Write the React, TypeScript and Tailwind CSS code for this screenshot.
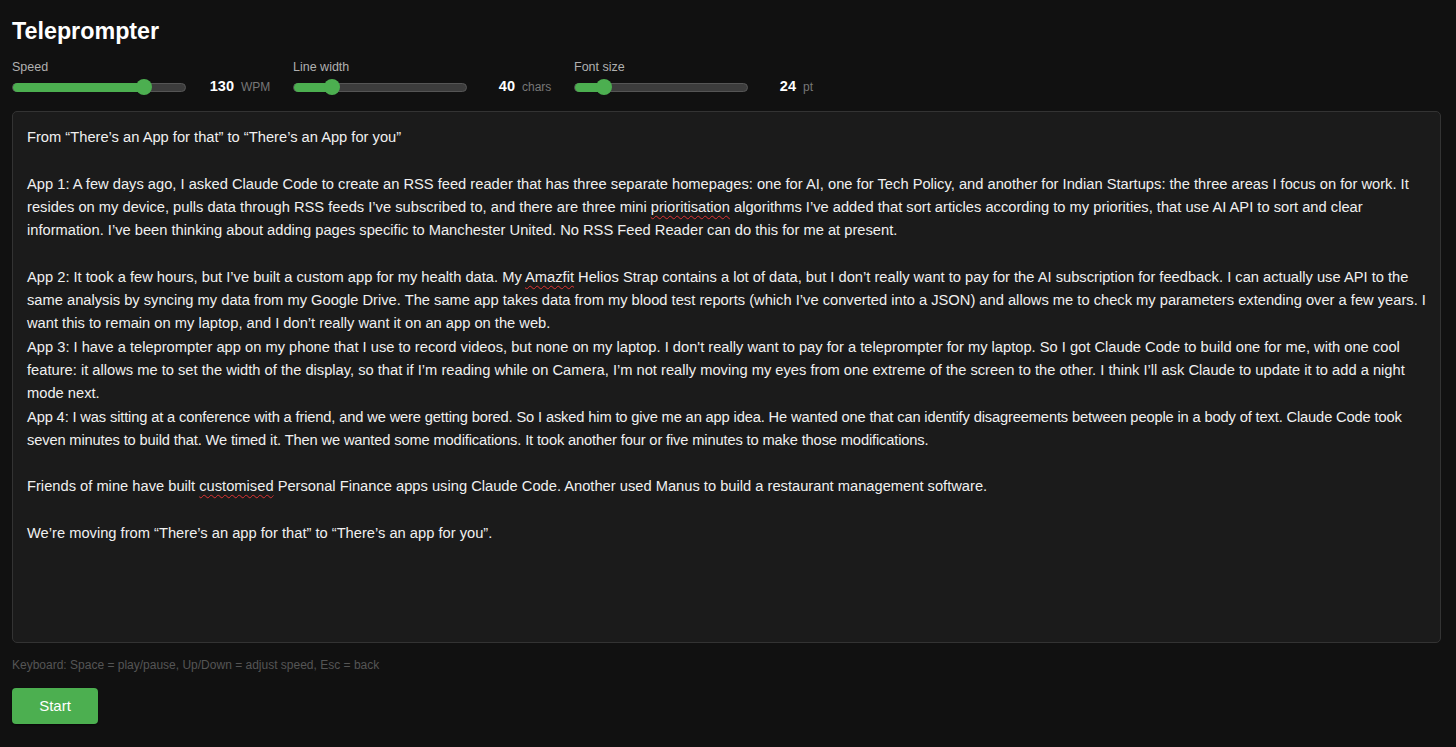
import React, { useState } from 'react';

interface SliderProps {
  label: string;
  value: number;
  min: number;
  max: number;
  unit: string;
  onChange: (v: number) => void;
}

const Slider: React.FC<SliderProps> = ({ label, value, min, max, unit, onChange }) => {
  const pct = ((value - min) / (max - min)) * 100;
  return (
    <div className="flex flex-col w-[281px]">
      <span className="text-[12.5px] leading-[16px] text-[#b0b0b0]">{label}</span>
      <div className="flex items-center h-[24px]">
        <div className="relative w-[174px] h-[9px] rounded-full bg-[#3c3c3c] border border-[#555]">
          <div className="absolute left-0 top-[-1px] h-[9px] rounded-full bg-[#4caf50]" style={{ width: `${pct}%` }} />
          <div
            className="absolute top-1/2 w-[16px] h-[16px] -translate-x-1/2 -translate-y-1/2 rounded-full bg-[#4caf50]"
            style={{ left: `${pct}%` }}
          />
          <input
            type="range"
            min={min}
            max={max}
            value={value}
            onChange={e => onChange(Number(e.target.value))}
            className="absolute inset-0 w-full opacity-0 cursor-pointer"
          />
        </div>
        <span className="w-[48px] text-right text-[14.5px] font-bold text-white">{value}</span>
        <span className="ml-[7px] text-[12px] text-[#777]">{unit}</span>
      </div>
    </div>
  );
};

const Misspelt: React.FC<{ children: React.ReactNode }> = ({ children }) => (
  <span className="underline decoration-wavy decoration-[#d33] decoration-1 underline-offset-[3px]">{children}</span>
);

export default function App() {
  const [speed, setSpeed] = useState(130);
  const [lineWidth, setLineWidth] = useState(40);
  const [fontSize, setFontSize] = useState(24);

  return (
    <div className="min-h-screen bg-[#111111] pl-[12px] pr-[15px] pt-[17px] text-white font-['Liberation_Sans',Arial,sans-serif]">
      <h1 className="text-[23.3px] leading-[28px] font-bold">Teleprompter</h1>

      <div className="flex mt-[14px]">
        <Slider label="Speed" value={speed} min={50} max={155} unit="WPM" onChange={setSpeed} />
        <Slider label="Line width" value={lineWidth} min={20} max={110} unit="chars" onChange={setLineWidth} />
        <Slider label="Font size" value={fontSize} min={16} max={63} unit="pt" onChange={setFontSize} />
      </div>

      <div className="mt-[12px] h-[532px] rounded-[5px] border border-[#333] bg-[#1b1b1b] pl-[14px] pr-[9px] pt-[14px] text-[14.7px] leading-[23.3px] text-[#f0f0f0] whitespace-pre-wrap overflow-hidden">
        {'From “There’s an App for that” to “There’s an App for you”\n\n'}
        {'App 1: A few days ago, I asked Claude Code to create an RSS feed reader that has three separate homepages: one for AI, one for Tech Policy, and another for Indian Startups: the three areas I focus on for work. It resides on my device, pulls data through RSS feeds I’ve subscribed to, and there are three mini '}
        <Misspelt>prioritisation</Misspelt>
        {' algorithms I’ve added that sort articles according to my priorities, that use AI API to sort and clear information. I’ve been thinking about adding pages specific to Manchester United. No RSS Feed Reader can do this for me at present.\n\n'}
        {'App 2: It took a few hours, but I’ve built a custom app for my health data. My '}
        <Misspelt>Amazfit</Misspelt>
        {' Helios Strap contains a lot of data, but I don’t really want to pay for the AI subscription for feedback. I can actually use API to the same analysis by syncing my data from my Google Drive. The same app takes data from my blood test reports (which I’ve converted into a JSON) and allows me to check my parameters extending over a few years. I want this to remain on my laptop, and I don’t really want it on an app on the web.\n'}
        {'App 3: I have a teleprompter app on my phone that I use to record videos, but none on my laptop. I don\'t really want to pay for a teleprompter for my laptop. So I got Claude Code to build one for me, with one cool feature: it allows me to set the width of the display, so that if I’m reading while on Camera, I’m not really moving my eyes from one extreme of the screen to the other. I think I’ll ask Claude to update it to add a night mode next.\n'}
        <span className="tracking-[-0.15px]">
          {'App 4: I was sitting at a conference with a friend, and we were getting bored. So I asked him to give me an app idea. He wanted one that can identify disagreements between people in a body of text. Claude Code took seven minutes to build that. We timed it. Then we wanted some modifications. It took another four or five minutes to make those modifications.'}
        </span>
        {'\n\n'}
        {'Friends of mine have built '}
        <Misspelt>customised</Misspelt>
        {' Personal Finance apps using Claude Code. Another used Manus to build a restaurant management software.\n\n'}
        {'We’re moving from “There’s an app for that” to “There’s an app for you”.'}
      </div>

      <p className="mt-[14px] text-[12px] leading-[16px] text-[#555]">
        Keyboard: Space = play/pause, Up/Down = adjust speed, Esc = back
      </p>

      <button
        type="button"
        className="mt-[15px] w-[86px] h-[36px] rounded-[4px] bg-[#4caf50] text-[15px] text-white shadow-[0_1px_2px_rgba(0,0,0,0.5)]"
      >
        Start
      </button>
    </div>
  );
}
